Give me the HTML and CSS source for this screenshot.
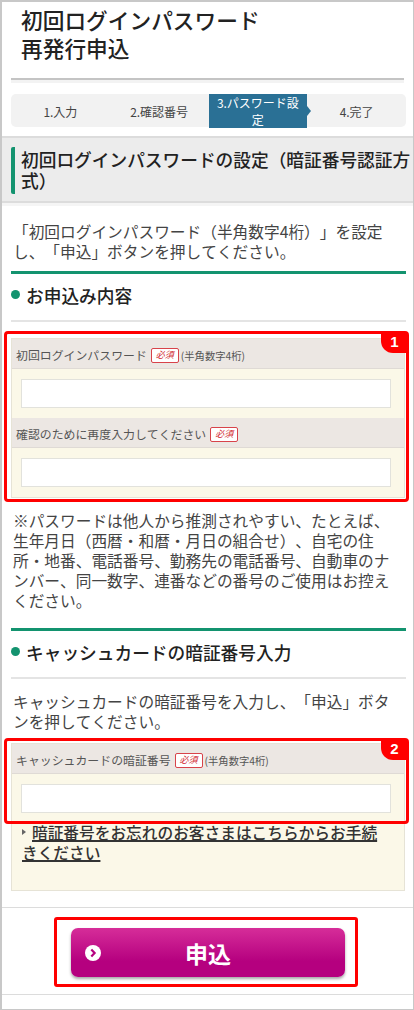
FILE: index.html
```html
<!DOCTYPE html>
<html lang="ja">
<head>
    <meta charset="UTF-8">
    <meta name="viewport" content="width=device-width, initial-scale=1.0">
    <title>初回ログインパスワード再発行申込</title>
    <link rel="stylesheet" href="styles.css">
</head>
<body>
    <div class="page">
        <h1 class="page-title">初回ログインパスワード<br>再発行申込</h1>

        <ol class="steps">
            <li class="step">1.入力</li>
            <li class="step">2.確認番号</li>
            <li class="step step-active">3.パスワード設定</li>
            <li class="step">4.完了</li>
        </ol>

        <h2 class="section-title"><span class="section-text">初回ログインパスワードの設定（暗証番号認証方式）</span></h2>

        <p class="lead">「初回ログインパスワード（半角数字4桁）」を設定し、「申込」ボタンを押してください。</p>

        <!-- Password fields -->
        <h3 class="sub-title">お申込み内容</h3>
        <div class="card callout-wrap">
            <div class="field-label">初回ログインパスワード<span class="required">必須</span><small class="hint">(半角数字4桁)</small></div>
            <div class="field-body"><input type="text" class="field-input"></div>
            <div class="field-label">確認のために再度入力してください<span class="required">必須</span></div>
            <div class="field-body"><input type="text" class="field-input"></div>
            <div class="callout"><span class="callout-num">1</span></div>
        </div>

        <p class="note">※パスワードは他人から推測されやすい、たとえば、生年月日（西暦・和暦・月日の組合せ）、自宅の住所・地番、電話番号、勤務先の電話番号、自動車のナンバー、同一数字、連番などの番号のご使用はお控えください。</p>

        <!-- Cash card PIN -->
        <h3 class="sub-title">キャッシュカードの暗証番号入力</h3>
        <p class="lead lead-pin">キャッシュカードの暗証番号を入力し、「申込」ボタンを押してください。</p>
        <div class="card">
            <div class="callout-wrap">
                <div class="field-label">キャッシュカードの暗証番号<span class="required">必須</span><small class="hint">(半角数字4桁)</small></div>
                <div class="field-body"><input type="text" class="field-input"></div>
                <div class="callout callout-pin"><span class="callout-num">2</span></div>
            </div>
            <p class="forgot"><a href="#">暗証番号をお忘れのお客さまはこちらからお手続きください</a></p>
        </div>

        <!-- Submit -->
        <div class="submit-row">
            <div class="submit-mark">
                <button type="button" class="submit-button">
                    <svg class="submit-icon" viewBox="0 0 16 16" width="16" height="16">
                        <circle cx="8" cy="8" r="8" fill="#fff"/>
                        <path d="M6.3 4.6 L9.6 8 L6.3 11.4" fill="none" stroke="#b5007f" stroke-width="2.2"/>
                    </svg>
                    申込
                </button>
            </div>
        </div>
    </div>
</body>
</html>
```

FILE: styles.css
```css
/* General page styles */
* {
    box-sizing: border-box;
}

html, body {
    margin: 0;
    padding: 0;
    background-color: #fff;
}

body {
    font-family: "Noto Sans CJK JP", "Noto Sans", sans-serif;
    color: #444;
    text-spacing-trim: space-all;
    font-kerning: none;
}

.page {
    width: 414px;
    height: 1010px;
    border: 2px solid #c8c8c8;
    border-bottom-width: 1px;
    border-right-width: 1px;
    overflow: hidden;
}

/* Page title */
.page-title {
    margin: 0 9px;
    padding: 4px 8px 13px 10px;
    height: 78px;
    font-size: 21.7px;
    line-height: 28px;
    font-weight: 500;
    color: #222;
    border-bottom: 2px solid #c4c4c4;
    box-shadow: 0 3px 0 #f3f3f3;
}

/* Step indicator */
.steps {
    display: grid;
    grid-template-columns: repeat(4, 1fr);
    list-style: none;
    margin: 14px 7px 0 9px;
    padding: 0;
    height: 33px;
    background-color: #f2f2f2;
    border-radius: 5px;
}

.step {
    display: flex;
    align-items: center;
    justify-content: center;
    text-align: center;
    font-size: 12px;
    line-height: 17px;
    color: #444;
}

.step-active {
    position: relative;
    padding: 0 8px;
    background-color: #2a7095;
    color: #fff;
}

.step-active::after {
    content: "";
    position: absolute;
    top: 50%;
    left: 100%;
    margin-top: -5px;
    border-style: solid;
    border-width: 5px 0 5px 4px;
    border-color: transparent transparent transparent #2a7095;
}

/* Section heading */
.section-title {
    margin: 9px 0 0;
    padding: 9px 0 9px 9px;
    height: 67px;
    background-color: #ececec;
    border-top: 2px solid #dcdcdc;
    border-bottom: 2px solid #dcdcdc;
    box-shadow: 0 3px 0 #f5f5f5;
    font-size: 17.7px;
    line-height: 21px;
    font-weight: 500;
    color: #222;
}

.section-text {
    display: block;
    height: 47px;
    padding: 2px 0 0 6px;
    border-left: 4px solid #13936f;
    border-radius: 2px;
}

/* Body text */
.lead, .note {
    margin: 0;
    padding: 0 11px;
    font-size: 15.7px;
    line-height: 20px;
}

.lead {
    margin-top: 19px;
}

.lead-pin {
    margin-top: 13px;
}

.note {
    margin-top: 13px;
}

/* Sub heading */
.sub-title {
    position: relative;
    margin: 9px 7px 0 9px;
    padding: 9px 0 9px 15px;
    height: 51px;
    border-top: 3px solid #13936f;
    border-bottom: 2px solid #e4e4e4;
    font-size: 17.7px;
    line-height: 25px;
    font-weight: 500;
    color: #222;
}

.sub-title::before {
    content: "";
    position: absolute;
    left: 0;
    top: 16px;
    width: 9px;
    height: 9px;
    border-radius: 50%;
    background-color: #13936f;
}

.note + .sub-title {
    margin-top: 17px;
}

/* Form card */
.card {
    margin: 16px 8px 0 9px;
    background-color: #fbf8e8;
    border: 1px solid #e6e3d6;
}

.lead-pin + .card {
    margin-top: 11px;
}

.field-label {
    height: 30px;
    padding: 4px 4px 0;
    background-color: #ece7e3;
    border-bottom: 1px solid #dfdad5;
    font-size: 11.9px;
    line-height: 24px;
    color: #555;
    white-space: nowrap;
}

.field-body {
    padding: 10px 13px 10px 9px;
}

.field-input {
    display: block;
    width: 100%;
    height: 29px;
    padding: 0 6px;
    background-color: #fff;
    border: 1px solid #e2e2dc;
    border-radius: 0;
}

.required {
    display: inline-block;
    width: 28px;
    height: 15px;
    margin: 0 2px 0 4px;
    vertical-align: 2px;
    background-color: #fff;
    border: 1px solid #d8434a;
    border-radius: 2px;
    font-family: "Liberation Serif", "Noto Sans CJK JP", serif;
    font-size: 9px;
    font-style: italic;
    line-height: 12px;
    text-align: center;
    color: #d0232c;
}

.hint {
    font-size: 10.3px;
    color: #555;
}

/* Red annotation frames */
.callout-wrap {
    position: relative;
}

.callout {
    position: absolute;
    top: -8px;
    left: -8px;
    right: -5px;
    bottom: -5px;
    border: 3px solid #f00;
    border-radius: 4px;
}

.callout-pin {
    top: -6px;
    bottom: -1px;
}

.callout-num {
    position: absolute;
    top: -2px;
    right: -2px;
    width: 27px;
    height: 21px;
    background-color: #f00;
    border-radius: 0 3px 0 12px;
    font-family: "Liberation Sans", sans-serif;
    font-size: 15px;
    font-weight: bold;
    line-height: 20px;
    text-align: center;
    color: #fff;
}

/* Forgotten PIN link */
.forgot {
    margin: 0;
    height: 67px;
    padding: 0 22px 0 10px;
    font-size: 15.7px;
    line-height: 20px;
    font-weight: 500;
}

.forgot a {
    color: #333;
    text-decoration: underline;
    text-decoration-thickness: 2px;
}

.forgot::before {
    content: "";
    display: inline-block;
    margin: 0 6px 6px 0;
    vertical-align: middle;
    border-style: solid;
    border-width: 3px 0 3px 4px;
    border-color: transparent transparent transparent #666;
}

/* Submit area */
.submit-row {
    display: flex;
    justify-content: center;
    margin-top: 16px;
    height: 88px;
    padding: 9px 3px 0 0;
    border-top: 1px solid #dcdcdc;
    border-bottom: 1px solid #dcdcdc;
}

.submit-mark {
    width: 304px;
    height: 70px;
    padding: 8px 10px 0 14px;
    border: 3px solid #f00;
    border-radius: 3px;
}

.submit-button {
    position: relative;
    display: block;
    width: 100%;
    height: 49px;
    padding: 0;
    border: none;
    border-radius: 7px;
    background: linear-gradient(#d62d99, #b5007f 68%);
    box-shadow: 0 2px 3px rgba(0, 0, 0, 0.35);
    font-family: inherit;
    font-size: 23px;
    font-weight: bold;
    color: #fff;
}

.submit-icon {
    position: absolute;
    left: 14px;
    top: 17px;
}
```
